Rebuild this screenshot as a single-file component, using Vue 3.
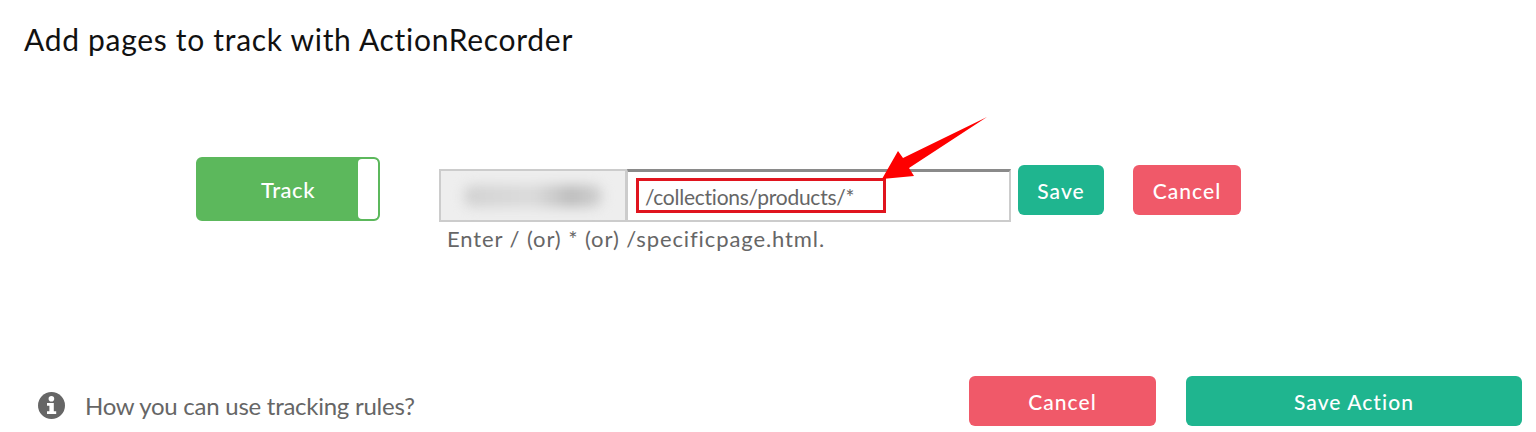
<template>
  <div class="page">
    <h1 class="title">Add pages to track with ActionRecorder</h1>

    <div class="rule-row">
      <div class="toggle">
        <span class="toggle-label">Track</span>
        <span class="toggle-knob"></span>
      </div>

      <div class="url-field">
        <div class="url-group">
          <div class="domain"><span class="domain-blur"></span></div>
          <div class="path">
            <span class="path-text">/collections/products/*</span>
            <!-- annotation drawn on top of the screenshot -->
            <span class="highlight"></span>
          </div>
        </div>
        <p class="hint">Enter / (or) * (or) /specificpage.html.</p>
        <svg class="arrow" width="110" height="72" viewBox="0 0 110 72">
          <path d="M106 2 L22 43 L17 36 L1 64 L33 61 L28 53 Z" fill="#fe0000" />
        </svg>
      </div>

      <button class="btn btn-green btn-save">Save</button>
      <button class="btn btn-red btn-cancel">Cancel</button>
    </div>

    <div class="footer">
      <div class="help">
        <svg class="help-icon" width="27" height="27" viewBox="0 0 27 27">
          <circle cx="13.5" cy="13.5" r="13.5" fill="#666" />
          <circle cx="13.4" cy="6.8" r="2.8" fill="#fff" />
          <path d="M9 11h6.8v8.2H18.2V22H9v-2.8h2.4v-5.4H9z" fill="#fff" />
        </svg>
        <span>How you can use tracking rules?</span>
      </div>
      <div class="footer-actions">
        <button class="btn btn-red btn-footer-cancel">Cancel</button>
        <button class="btn btn-green btn-footer-save">Save Action</button>
      </div>
    </div>
  </div>
</template>

<script setup>
</script>

<style>
body {
  background: #fff;
}
</style>

<style scoped>
.page {
  width: 1536px;
  height: 432px;
  overflow: hidden;
  display: flex;
  flex-direction: column;
  background: #fff;
  font-family: Lato, "Liberation Sans", sans-serif;
}

.title {
  margin: 21px 0 0 24px;
  font-size: 30px;
  line-height: 36px;
  font-weight: 400;
  letter-spacing: 0.7px;
  color: #111;
}

.rule-row {
  display: flex;
  align-items: flex-start;
  margin-top: 100px;
  padding-left: 196px;
}

.toggle {
  width: 184px;
  height: 64px;
  box-sizing: border-box;
  display: flex;
  background: #5cb85c;
  border: 2px solid #5cb85c;
  border-radius: 6px;
  overflow: hidden;
}

.toggle-label {
  flex: 1;
  display: flex;
  align-items: center;
  justify-content: center;
  padding-left: 20px;
  color: #fff;
  font-size: 22px;
  font-weight: 500;
  letter-spacing: 0.5px;
}

.toggle-knob {
  width: 20px;
  background: #fff;
  border-radius: 4px;
}

.url-field {
  position: relative;
  width: 572px;
  margin: 12px 0 0 59px;
}

.url-group {
  display: flex;
  height: 53px;
}

.domain {
  width: 188px;
  box-sizing: border-box;
  display: flex;
  align-items: center;
  justify-content: center;
  background: #eee;
  border: 2px solid #ccc;
}

.domain-blur {
  width: 138px;
  height: 22px;
  background: linear-gradient(90deg, #d2d2d2, #dadada 50%, #bcbcbc 78%, #d2d2d2);
  border-radius: 8px;
  filter: blur(6px);
}

.path {
  position: relative;
  flex: 1;
  box-sizing: border-box;
  display: flex;
  align-items: center;
  padding: 1px 0 0 17px;
  background: #fff;
  border: 2px solid #ccc;
  border-top: 3px solid #8a8a8a;
  border-left-width: 1px;
  font-size: 21px;
  color: #666;
  letter-spacing: -0.25px;
}

.highlight {
  position: absolute;
  left: 8px;
  top: 6px;
  width: 250px;
  height: 35px;
  box-sizing: border-box;
  border: 3px solid #e0141e;
  pointer-events: none;
}

.arrow {
  position: absolute;
  left: 442px;
  top: -54px;
}

.hint {
  margin: 4px 0 0 8px;
  font-size: 22px;
  line-height: 26px;
  letter-spacing: 0.9px;
  color: #666;
}

.btn {
  border: none;
  border-radius: 6px;
  color: #fff;
  font-family: inherit;
  font-size: 21px;
  font-weight: 500;
  letter-spacing: 1.05px;
  padding: 0;
  cursor: pointer;
}

.btn-green {
  background: #1fb58f;
}

.btn-red {
  background: #f05969;
}

.btn-save {
  width: 86px;
  height: 50px;
  margin: 8px 0 0 7px;
}

.btn-cancel {
  width: 108px;
  height: 50px;
  margin: 8px 0 0 29px;
}

.footer {
  display: flex;
  align-items: center;
  justify-content: space-between;
  margin-top: auto;
  padding: 0 14px 6px 38px;
}

.help {
  display: flex;
  align-items: center;
  gap: 20px;
  padding-top: 9px;
  font-size: 24px;
  letter-spacing: -0.26px;
  color: #666;
}

.help-icon {
  flex: none;
}

.footer-actions {
  display: flex;
  gap: 30px;
}

.btn-footer-cancel {
  width: 187px;
  height: 50px;
}

.btn-footer-save {
  width: 336px;
  height: 50px;
}
</style>
